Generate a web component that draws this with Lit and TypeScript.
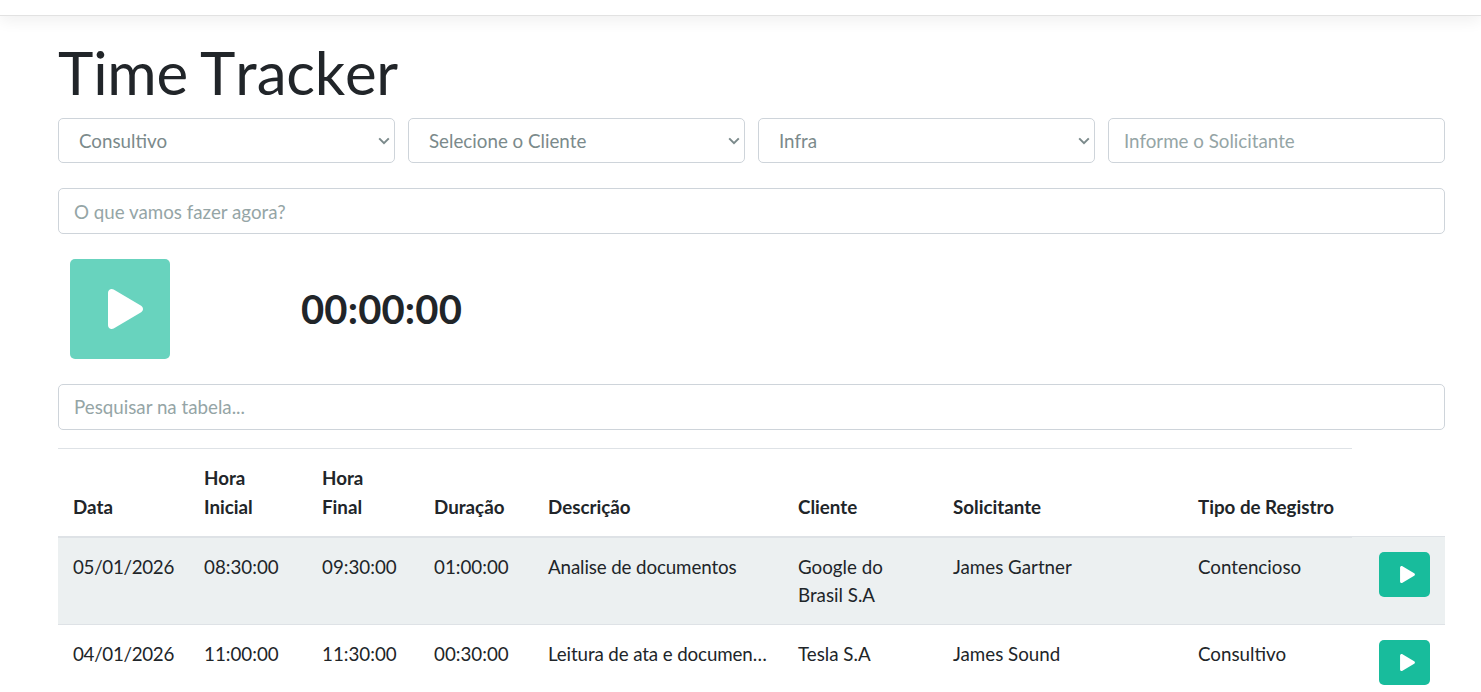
import { LitElement, html, css, svg } from 'lit';
import { customElement } from 'lit/decorators.js';

const playIcon = svg`<path d="M424.4 214.7L72.4 6.6C43.8-10.3 0 6.1 0 47.9V464c0 37.5 40.7 60.1 72.4 41.3l352-208c31.4-18.5 31.5-64.1 0-82.6z" fill="currentColor"></path>`;

const rows = [
  { data: '05/01/2026', inicio: '08:30:00', fim: '09:30:00', duracao: '01:00:00', descricao: 'Analise de documentos', cliente: 'Google do Brasil S.A', solicitante: 'James Gartner', tipo: 'Contencioso' },
  { data: '04/01/2026', inicio: '11:00:00', fim: '11:30:00', duracao: '00:30:00', descricao: 'Leitura de ata e documen…', cliente: 'Tesla S.A', solicitante: 'James Sound', tipo: 'Consultivo' },
];

@customElement('app-root')
export class AppRoot extends LitElement {
  static styles = css`
    :host {
      display: block;
      height: 692px;
      overflow: hidden;
      font-family: Lato, "Liberation Sans", sans-serif;
      font-size: 18.75px;
      line-height: 28.125px;
      color: #212529;
      background: #fff;
    }

    .topbar {
      height: 16px;
      border-bottom: 1px solid #e2e2e2;
      box-sizing: border-box;
      box-shadow: 0 4px 16px rgba(0, 0, 0, 0.07);
    }

    .container {
      padding: 20px 36px 0 58px;
    }

    h1 {
      margin: 0 0 10px;
      font-size: 60px;
      line-height: 72px;
      font-weight: 400;
      font-kerning: none;
      letter-spacing: -0.25px;
      word-spacing: -3px;
    }

    .filters {
      display: grid;
      grid-template-columns: repeat(4, 337px);
      gap: 13px;
      margin-bottom: 25px;
    }

    .field {
      display: block;
      box-sizing: border-box;
      width: 100%;
      height: 46px;
      padding: 7px 15px;
      border: 1px solid #ced4da;
      border-radius: 5px;
      background-color: #fff;
      color: #7b8a8b;
      font: inherit;
      outline: none;
    }

    .filters .field {
      height: 45px;
    }

    .field::placeholder {
      color: #95a5a6;
      opacity: 1;
    }

    select.field {
      appearance: none;
      padding: 8px 15px 6px 20px;
      background-image: url("data:image/svg+xml,%3Csvg xmlns='http://www.w3.org/2000/svg' width='12' height='8' viewBox='0 0 12 8'%3E%3Cpath d='M1.2 1.4 6 6.2l4.8-4.8' fill='none' stroke='%237b8a8b' stroke-width='2'/%3E%3C/svg%3E");
      background-repeat: no-repeat;
      background-position: right 4px center;
    }

    .wide {
      margin-bottom: 25px;
    }

    .timer {
      display: flex;
      align-items: center;
      gap: 131px;
      padding-left: 12px;
      margin-bottom: 25px;
    }

    .start {
      display: flex;
      align-items: center;
      justify-content: center;
      width: 100px;
      height: 100px;
      padding: 0;
      border: none;
      border-radius: 5px;
      background: #18bc9c;
      opacity: 0.65;
      color: #fff;
    }

    .start svg {
      width: 35px;
      height: 40px;
      margin-left: 11px;
    }

    .clock {
      font-size: 40px;
      line-height: 48px;
      font-weight: 700;
      letter-spacing: 0.15px;
    }

    .search {
      padding: 6px 15px 8px;
      margin-bottom: 18.3px;
    }

    table {
      table-layout: fixed;
      width: 1387px;
      border-collapse: collapse;
    }

    .c1 { width: 131px; }
    .c2 { width: 118px; }
    .c3 { width: 112px; }
    .c4 { width: 114px; }
    .c5 { width: 250px; }
    .c6 { width: 155px; }
    .c7 { width: 245px; }
    .c8 { width: 169px; }
    .c9 { width: 93px; }

    th {
      padding: 13.5px 15px 14.75px;
      border-top: 1px solid #dee2e6;
      border-bottom: 2px solid #dee2e6;
      text-align: left;
      vertical-align: bottom;
      font-weight: 700;
      line-height: 29px;
    }

    td {
      padding: 15px;
      border-top: 1px solid #dee2e6;
      vertical-align: top;
    }

    tbody tr:nth-child(odd) {
      background: #ecf0f1;
    }

    .date {
      letter-spacing: -0.3px;
    }

    .clip {
      white-space: nowrap;
      letter-spacing: -0.12px;
    }

    .action {
      text-align: right;
    }

    .run {
      display: inline-flex;
      align-items: center;
      justify-content: center;
      width: 51px;
      height: 45px;
      padding: 0;
      border: none;
      border-radius: 5px;
      background: #18bc9c;
      color: #fff;
      vertical-align: top;
    }

    .run svg {
      width: 15px;
      height: 17px;
      margin-left: 6px;
    }
  `;

  render() {
    return html`
      <div class="topbar"></div>
      <div class="container">
        <h1>Time Tracker</h1>
        <div class="filters">
          <select class="field"><option>Consultivo</option></select>
          <select class="field"><option>Selecione o Cliente</option></select>
          <select class="field"><option>Infra</option></select>
          <input class="field" placeholder="Informe o Solicitante" />
        </div>
        <input class="field wide" placeholder="O que vamos fazer agora?" />
        <div class="timer">
          <button class="start"><svg viewBox="0 0 448 512">${playIcon}</svg></button>
          <div class="clock">00:00:00</div>
        </div>
        <input class="field search" placeholder="Pesquisar na tabela..." />
        <table>
          <colgroup>
            <col class="c1" /><col class="c2" /><col class="c3" /><col class="c4" /><col class="c5" /><col class="c6" /><col class="c7" /><col class="c8" /><col class="c9" />
          </colgroup>
          <thead>
            <tr>
              <th>Data</th>
              <th>Hora Inicial</th>
              <th>Hora Final</th>
              <th>Duração</th>
              <th>Descrição</th>
              <th>Cliente</th>
              <th>Solicitante</th>
              <th>Tipo de Registro</th>
            </tr>
          </thead>
          <tbody>
            ${rows.map(
              (r) => html`
                <tr>
                  <td class="date">${r.data}</td>
                  <td>${r.inicio}</td>
                  <td>${r.fim}</td>
                  <td>${r.duracao}</td>
                  <td class="clip">${r.descricao}</td>
                  <td>${r.cliente}</td>
                  <td>${r.solicitante}</td>
                  <td>${r.tipo}</td>
                  <td class="action"><button class="run"><svg viewBox="0 0 448 512">${playIcon}</svg></button></td>
                </tr>
              `
            )}
          </tbody>
        </table>
      </div>
    `;
  }
}
